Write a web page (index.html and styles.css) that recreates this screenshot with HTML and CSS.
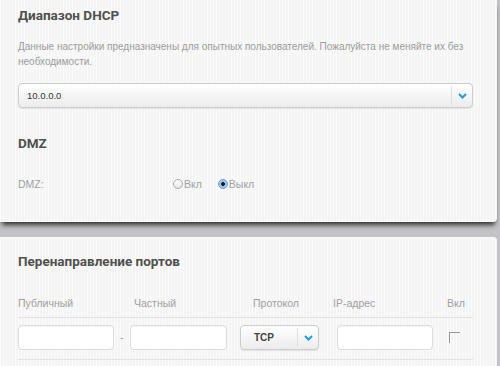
FILE: index.html
```html
<!DOCTYPE html>
<html lang="ru">
<head>
<meta charset="utf-8">
<link rel="stylesheet" href="styles.css">
</head>
<body>
<div class="page">
  <section class="card card-top">
    <h2 class="title">Диапазон DHCP</h2>
    <p class="desc">Данные настройки предназначены для опытных пользователей. Пожалуйста не меняйте их без необходимости.</p>
    <div class="select select-wide">
      <span class="select-value">10.0.0.0</span>
      <span class="select-arrow"><svg width="9" height="6" viewBox="0 0 9 6"><polyline points="1,1 4.5,4.5 8,1" fill="none" stroke="#1f9be0" stroke-width="2"/></svg></span>
    </div>
    <h2 class="title title-dmz">DMZ</h2>
    <div class="dmz-row">
      <span class="label dmz-label">DMZ:</span>
      <span class="radio"><span class="radio-dot"></span>Вкл</span>
      <span class="radio radio-on"><span class="radio-dot"></span>Выкл</span>
    </div>
  </section>
  <section class="card card-bottom">
    <h2 class="title">Перенаправление портов</h2>
    <div class="head-row">
      <span class="label col-h1">Публичный</span>
      <span class="label col-h2">Частный</span>
      <span class="label col-h3">Протокол</span>
      <span class="label col-h4">IP-адрес</span>
      <span class="label col-h5">Вкл</span>
    </div>
    <div class="input-row">
      <span class="input w96"></span>
      <span class="dash">-</span>
      <span class="input w97"></span>
      <div class="select select-small">
        <span class="select-value tcp">TCP</span>
        <span class="select-arrow"><svg width="9" height="6" viewBox="0 0 9 6"><polyline points="1,1 4.5,4.5 8,1" fill="none" stroke="#1f9be0" stroke-width="2"/></svg></span>
      </div>
      <span class="input w96 ip"></span>
      <span class="checkbox"></span>
    </div>
  </section>
</div>
</body>
</html>
```
FILE: styles.css
```css
html, body {
  margin: 0;
  padding: 0;
}
body {
  background: #c3c3c7;
  width: 500px;
  height: 366px;
  overflow: hidden;
  font-family: "Liberation Sans", Arial, sans-serif;
}
.page {
  padding-right: 3px;
}
.card {
  background-color: #f4f4f4;
  background-image: repeating-linear-gradient(90deg, rgba(255,255,255,0.6) 0 1px, rgba(0,0,0,0) 1px 3px);
  box-sizing: border-box;
}
.card-top {
  height: 222px;
  padding: 5px 27px 0 18px;
  border-radius: 0 0 4px 0;
  box-shadow: 0 5px 5px -2px rgba(0,0,0,0.75);
  position: relative;
  z-index: 1;
}
.card-bottom {
  margin-top: 15px;
  height: 140px;
  padding: 13px 27px 0 18px;
  border-radius: 0 4px 0 0;
  border-top: 1px solid #fafafa;
}
.title {
  margin: 0;
  font-family: Roboto, sans-serif;
  font-weight: 700;
  font-size: 13.5px;
  line-height: 20px;
  color: #505050;
}
.desc {
  margin: 14px 0 0;
  font-size: 10px;
  line-height: 15px;
  color: #9c9c9c;
}
.select {
  box-sizing: border-box;
  height: 25px;
  border: 1px solid #cdcdcd;
  border-radius: 4px;
  background: linear-gradient(#ffffff, #ececec);
  box-shadow: 0 1px 1px rgba(0,0,0,0.08);
  display: flex;
  align-items: center;
}
.select-wide {
  margin-top: 14px;
  width: 455px;
}
.select-value {
  flex: 1;
  padding-left: 8px;
  font-size: 9.5px;
  color: #333;
}
.select-value.tcp {
  padding-left: 13px;
  font-weight: 700;
  font-size: 10px;
  color: #444;
}
.select-arrow {
  width: 20px;
  height: 19px;
  border-left: 1px solid #dedede;
  display: flex;
  align-items: center;
  justify-content: center;
}
.title-dmz {
  margin-top: 25px;
}
.dmz-row {
  margin-top: 21px;
  height: 20px;
  display: flex;
  align-items: center;
}
.label {
  font-size: 10.5px;
  color: #a0a0a0;
}
.dmz-label {
  width: 155px;
}
.radio {
  display: flex;
  align-items: center;
  font-size: 10.5px;
  color: #a0a0a0;
  margin-right: 16px;
}
.radio-dot {
  box-sizing: border-box;
  width: 10px;
  height: 10px;
  border-radius: 50%;
  border: 1px solid #ababab;
  background: linear-gradient(#ffffff, #e6e6e6);
  margin-right: 1px;
}
.radio-on .radio-dot {
  border-color: #6f9ccd;
  background: radial-gradient(circle, #222 0 1.6px, #8fc0ef 2.2px, #b9dbfa 100%);
}
.head-row {
  margin-top: 24px;
  width: 455px;
  height: 16px;
  display: flex;
  align-items: center;
  padding-bottom: 6px;
  border-bottom: 1px solid #e3e3e3;
}
.col-h1 { width: 116px; }
.col-h2 { width: 119px; }
.col-h3 { width: 80px; }
.col-h4 { width: 114px; }
.input-row {
  width: 455px;
  height: 25px;
  padding: 7px 0 9px;
  display: flex;
  align-items: center;
  border-bottom: 1px solid #e3e3e3;
}
.input {
  box-sizing: border-box;
  height: 25px;
  background: #fff;
  border: 1px solid #dcdcdc;
  border-radius: 4px;
  box-shadow: inset 0 1px 1px rgba(0,0,0,0.04);
}
.w96 { width: 96px; }
.w97 { width: 97px; }
.dash {
  width: 16px;
  text-align: center;
  font-size: 10px;
  color: #999;
}
.select-small {
  width: 79px;
  margin-left: 13px;
}
.ip {
  margin-left: 18px;
}
.checkbox {
  box-sizing: border-box;
  width: 11px;
  height: 11px;
  margin-left: 16px;
  border-top: 1px solid #999;
  border-left: 1px solid #999;
}
```
